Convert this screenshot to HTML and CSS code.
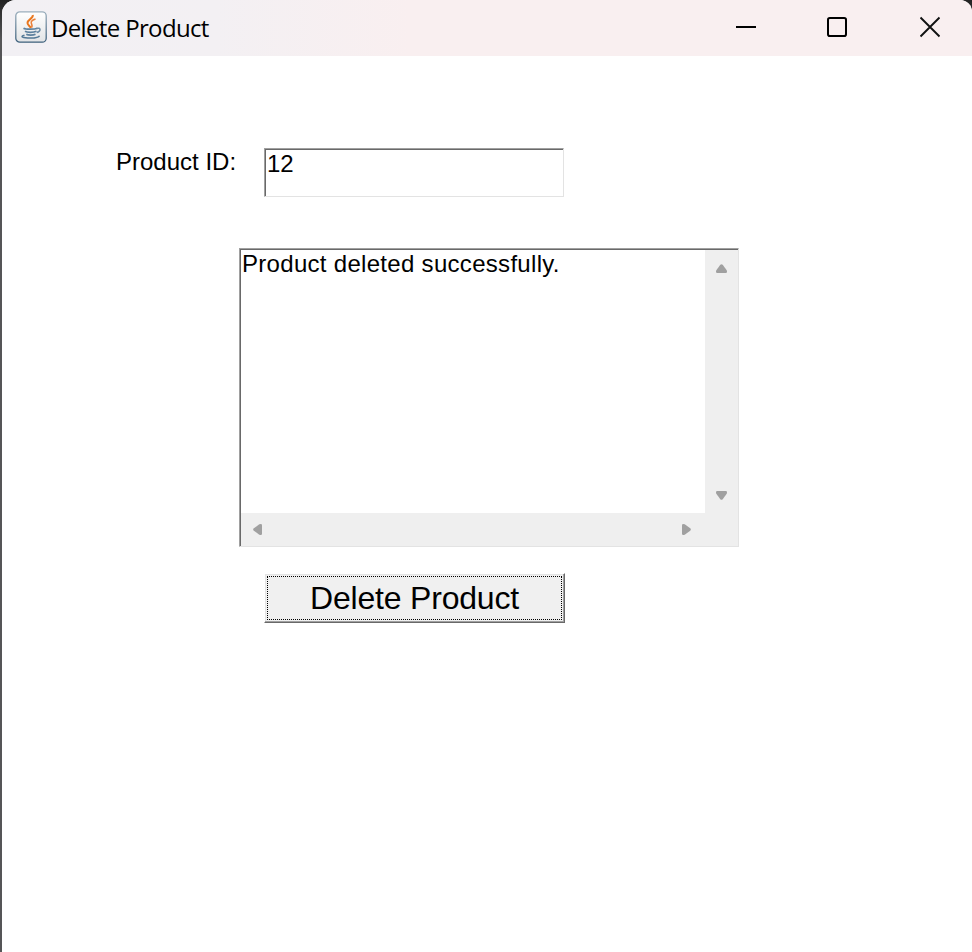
FILE: index.html
```html
<!DOCTYPE html>
<html lang="en">
<head>
<meta charset="utf-8">
<title>Delete Product</title>
<link rel="stylesheet" href="styles.css">
</head>
<body>
<div class="window">
  <header class="titlebar">
    <svg class="app-icon" width="32" height="32" viewBox="0 0 32 32" fill="none">
      <defs><linearGradient id="tile" x1="0" y1="0" x2="0" y2="1"><stop offset="0" stop-color="#fff"/><stop offset="1" stop-color="#e2e4e6"/></linearGradient>
      <linearGradient id="edge" x1="0" y1="0" x2="0" y2="1"><stop offset="0" stop-color="#9cafbd"/><stop offset="1" stop-color="#3d607c"/></linearGradient></defs>
      <rect x=".8" y=".8" width="30.4" height="30.4" rx="4" fill="url(#tile)" stroke="url(#edge)" stroke-width="1.300"/>
      <path d="M17.800 4c.8 3.500-5.500 4.500-5.300 8 .1 2 2.200 2.800 3.300 5" stroke="#e9771e" stroke-width="2"/>
      <path d="M20.500 8c-2.500.8-5 2.200-4.200 4.200.5 1.200 1.500 2.300.2 4.500" stroke="#ea803a" stroke-width="1.600"/>
      <path d="M8.500 17.200c2 1.300 11 1.300 14 0M10 20.300c2 1.300 8.500 1.300 11.500 0M11.300 23.200c2 1.200 6.700 1.200 9.200 0" stroke="#5d819e" stroke-width="1.700"/>
      <path d="M21.500 17.500c4.500-1.500 4.800 2.800.2 4" stroke="#6d8da7" stroke-width="1.500"/>
      <path d="M9.500 24.300c-5 1.200-2 2.700 6 2.700 5.500 0 8.500-.9 9-2.300" stroke="#537895" stroke-width="1.500"/>
    </svg>
    <h1 class="title">Delete Product</h1>
    <div class="controls">
      <svg width="92" height="56" viewBox="0 0 92 56"><path d="M36 27H56" stroke="#000" stroke-width="2"/></svg>
      <svg width="92" height="56" viewBox="0 0 92 56"><rect x="36" y="18" width="18" height="18" rx="1.800" fill="none" stroke="#000" stroke-width="2"/></svg>
      <svg width="88" height="56" viewBox="0 0 88 56"><path d="M36.500 17.500L55.500 36.500M55.500 17.500L36.500 36.500" stroke="#111" stroke-width="1.900"/></svg>
    </div>
  </header>
  <main class="content">
    <div class="field-row">
      <span class="label">Product ID:</span>
      <div class="sunken text-field">12</div>
    </div>
    <div class="sunken text-area">
      <div class="text">Product deleted successfully.</div>
      <div class="scroll vertical">
        <svg width="11" height="9" viewBox="0 0 11 9"><path d="M4.300.8Q5.500-.5 6.700.8L10.700 6.300Q11.600 9 9.800 9H1.200Q-.6 9 .3 6.300Z"/></svg>
        <svg width="11" height="9" viewBox="0 0 11 9"><path d="M4.300 8.200Q5.500 9.500 6.700 8.200L10.700 2.700Q11.600 0 9.800 0H1.200Q-.6 0 .3 2.700Z"/></svg>
      </div>
      <div class="scroll horizontal">
        <svg width="9" height="11" viewBox="0 0 9 11"><path d="M.8 4.300Q-.5 5.500.8 6.700L6.300 10.700Q9 11.600 9 9.800V1.200Q9-.6 6.300.3Z"/></svg>
        <svg width="9" height="11" viewBox="0 0 9 11"><path d="M8.200 4.300Q9.500 5.500 8.200 6.700L2.700 10.700Q0 11.600 0 9.800V1.200Q0-.6 2.700.3Z"/></svg>
      </div>
      <div class="corner"></div>
    </div>
    <button class="button" type="button"><span class="focus">Delete Product</span></button>
  </main>
</div>
</body>
</html>
```
FILE: styles.css
```css
* { box-sizing: border-box; }
body { margin: 0; background: linear-gradient(180deg, #222 0, #555557 40px); font-family: "Liberation Sans", Arial, sans-serif; color: #000; }
.window { margin-left: 2px; height: 952px; background: #fff; border-radius: 14px 12px 0 0; overflow: hidden; }
.titlebar { display: flex; height: 56px; padding-left: 13px; background: linear-gradient(90deg, #f2f0f4 0%, #f3f0f3 22%, #f9eff0 42%, #f9eff0 100%); }
.app-icon { margin-top: 11px; }
.title { margin: 0 0 0 4px; font: 400 24px/56px "Open Sans", "Noto Sans", sans-serif; letter-spacing: -0.65px; white-space: nowrap; }
.controls { display: flex; margin-left: auto; }
.content { padding: 92px 0 0 237px; }
.field-row { display: flex; height: 49px; margin-left: -123px; font-size: 24px; line-height: 28px; }
.label { width: 148px; white-space: nowrap; }
.sunken { border: 1px solid; border-color: #a0a0a0 #e3e3e3 #e3e3e3 #a0a0a0; box-shadow: inset 1px 1px #696969; background: #fff; }
.text-field { width: 300px; padding: 1px 0 0 2px; }
.text-area { display: grid; grid-template: 263px 33px / 464px 33px; width: 500px; height: 299px; margin-top: 51px; padding: 1px 0 0 1px; font-size: 24px; line-height: 28px; letter-spacing: 0.3px; }
.text { padding-left: 1px; }
.scroll { display: flex; align-items: center; justify-content: space-between; background: #efefef; }
.scroll svg { display: block; fill: #a0a0a0; }
.vertical { flex-direction: column; padding: 14px 0 13px; }
.horizontal { padding: 0 14px 0 12px; }
.corner { background: #efefef; }
.button { display: block; width: 301px; height: 50px; margin: 26px 0 0 25px; padding: 1px; border: 1px solid; border-color: #fff #696969 #696969 #fff; box-shadow: inset -1px -1px #a0a0a0, inset 1px 1px #e3e3e3; background: #f0f0f0; color: #000; font: 32px/42px "Liberation Sans", Arial, sans-serif; letter-spacing: -0.2px; }
.focus { display: block; width: 295px; height: 44px; margin: 0 0 0 1px; border: 1px dotted #000; }
```
